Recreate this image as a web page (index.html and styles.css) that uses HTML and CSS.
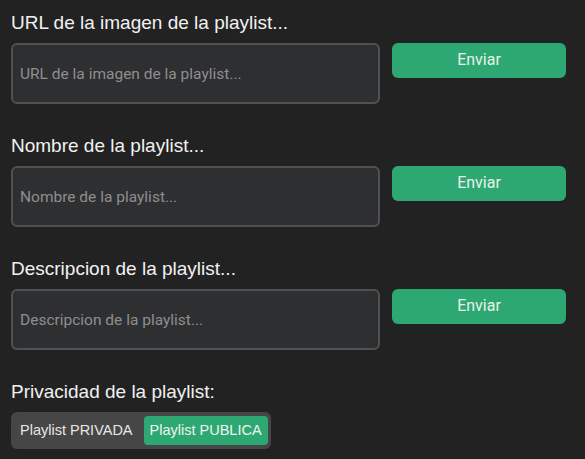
FILE: index.html
```html
<!DOCTYPE html>
<html lang="es">
<head>
<meta charset="utf-8">
<title>Playlist</title>
<link rel="stylesheet" href="styles.css">
</head>
<body>
<main class="form">
  <section class="group">
    <label class="label" for="url">URL de la imagen de la playlist...</label>
    <div class="row">
      <input class="field" id="url" type="text" placeholder="URL de la imagen de la playlist...">
      <button class="send" type="button">Enviar</button>
    </div>
  </section>
  <section class="group">
    <label class="label" for="name">Nombre de la playlist...</label>
    <div class="row">
      <input class="field" id="name" type="text" placeholder="Nombre de la playlist...">
      <button class="send" type="button">Enviar</button>
    </div>
  </section>
  <section class="group">
    <label class="label" for="desc">Descripcion de la playlist...</label>
    <div class="row">
      <input class="field" id="desc" type="text" placeholder="Descripcion de la playlist...">
      <button class="send" type="button">Enviar</button>
    </div>
  </section>
  <section class="group">
    <div class="label">Privacidad de la playlist:</div>
    <div class="toggle">
      <span class="opt">Playlist PRIVADA</span>
      <span class="opt opt-active">Playlist PUBLICA</span>
    </div>
  </section>
</main>
</body>
</html>
```
FILE: styles.css
```css
html, body {
  margin: 0;
  padding: 0;
  background: #222222;
}
body {
  width: 585px;
  height: 459px;
  overflow: hidden;
  font-family: "Liberation Sans", Arial, sans-serif;
}
.form {
  display: flex;
  flex-direction: column;
  gap: 31px;
  padding: 12px 19px 0 11px;
}
.group {
  display: flex;
  flex-direction: column;
  align-items: flex-start;
  gap: 9px;
}
.label {
  display: block;
  font-size: 19px;
  line-height: 22px;
  color: #f1f1f1;
}
.row {
  display: flex;
  align-items: flex-start;
  gap: 12px;
  width: 100%;
}
.field {
  flex: 1;
  min-width: 0;
  box-sizing: border-box;
  height: 61px;
  margin: 0;
  padding: 0 7px;
  background: #2e2f31;
  border: 2px solid #505153;
  border-radius: 6px;
  font-family: Roboto, "Liberation Sans", sans-serif;
  font-size: 15.5px;
  color: #dddddd;
  outline: none;
}
.field::placeholder {
  color: #8e8e8e;
  opacity: 1;
}
.send {
  flex: 0 0 174px;
  height: 35px;
  margin: 0;
  padding: 0 0 2px;
  border: none;
  border-radius: 6px;
  background: #2ea872;
  color: #e6f1ea;
  font-family: Roboto, "Liberation Sans", sans-serif;
  font-size: 16px;
}
.toggle {
  display: flex;
  gap: 5px;
  padding: 4px 3px;
  background: #464646;
  border-radius: 6px;
}
.opt {
  padding: 0 6px;
  font-size: 14.5px;
  line-height: 29px;
  color: #e8e8e8;
  border-radius: 4px;
}
.opt-active {
  background: #2ea872;
  color: #eef5f0;
}
```
